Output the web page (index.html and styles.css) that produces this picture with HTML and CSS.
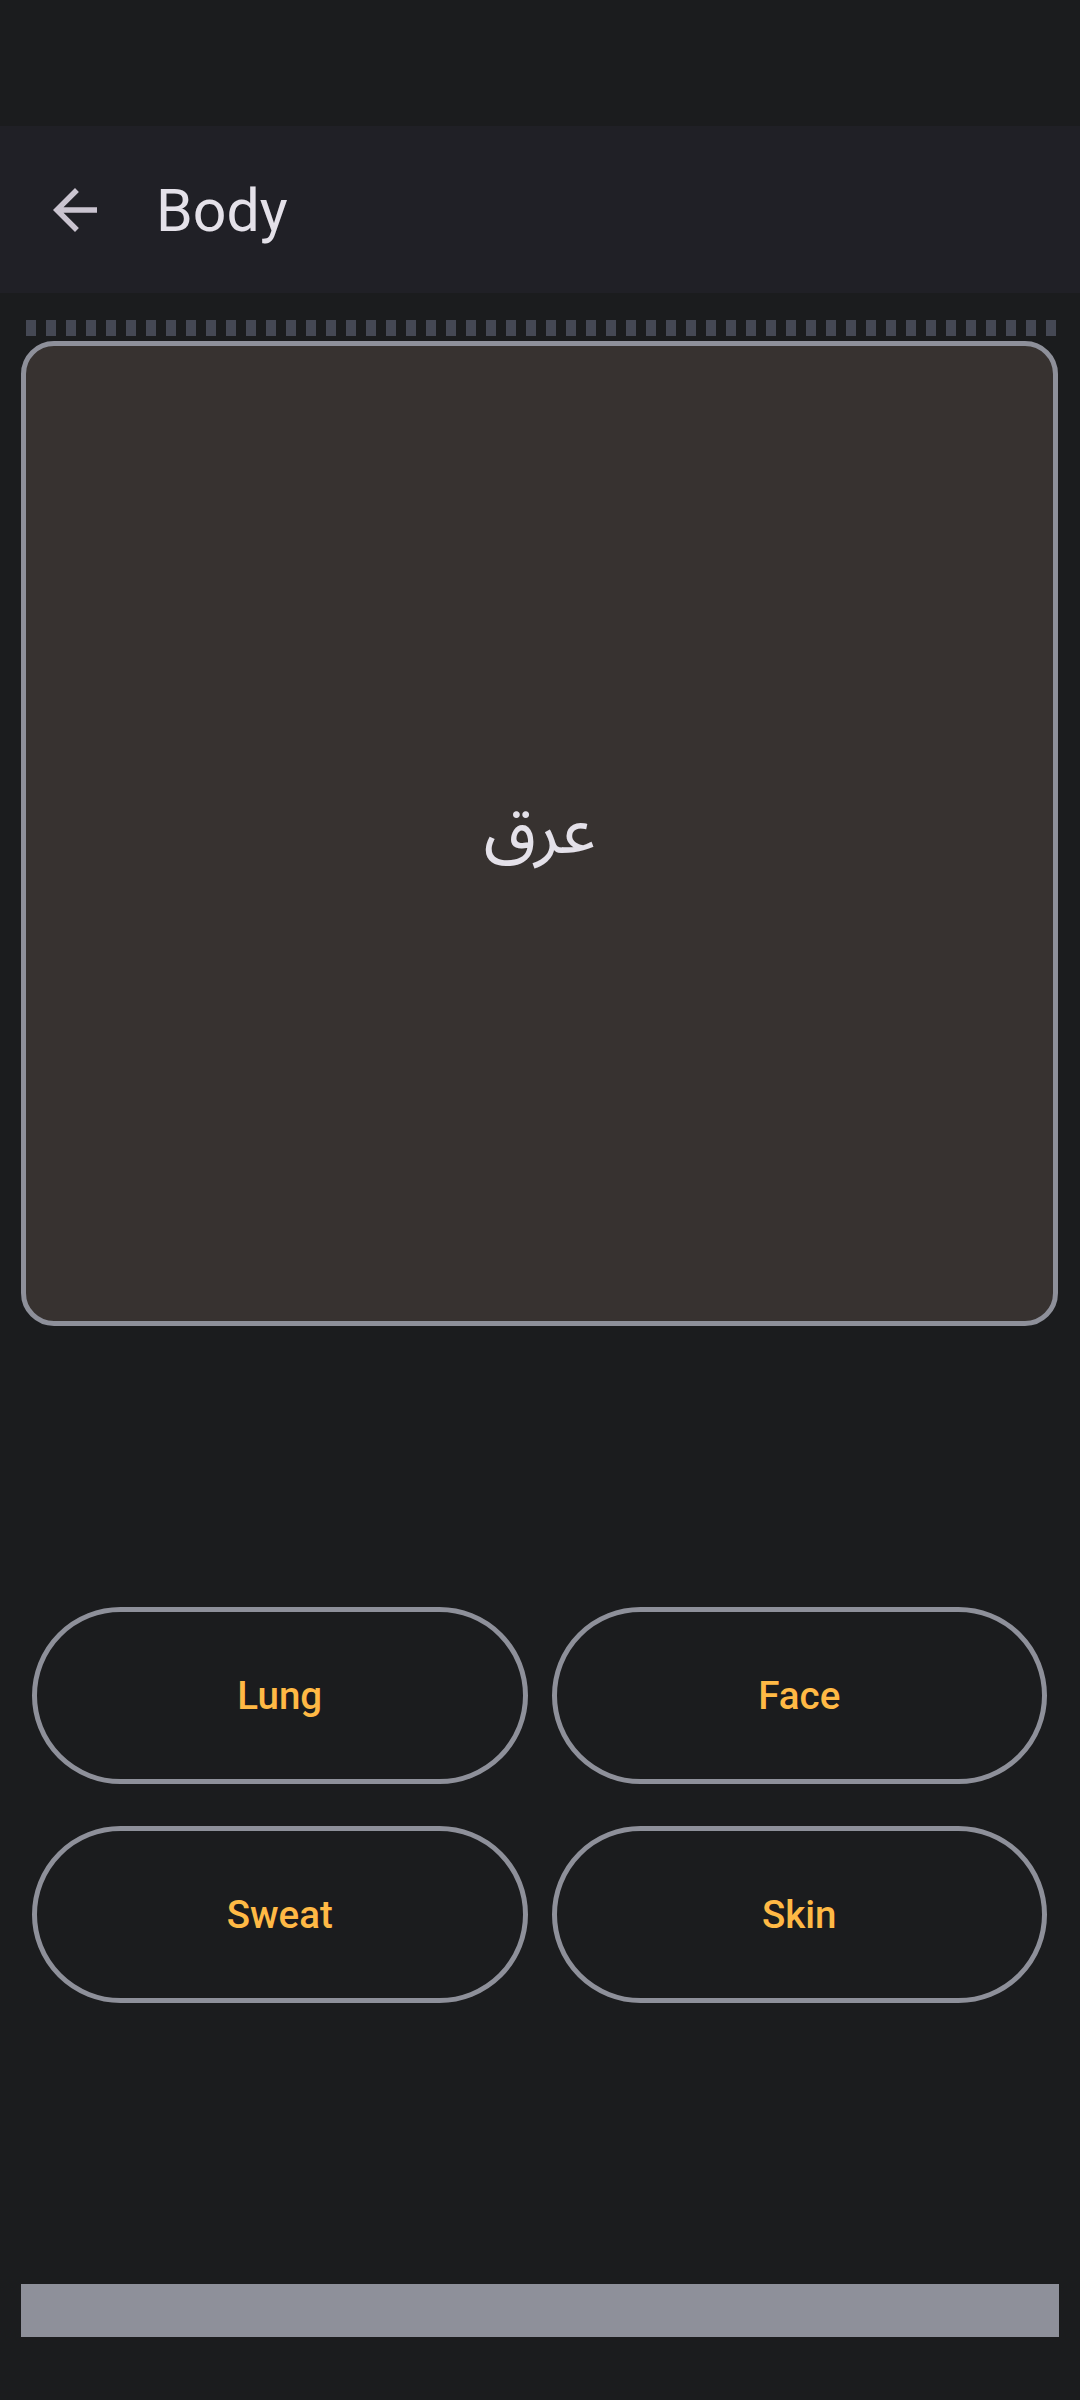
FILE: index.html
```html
<!DOCTYPE html>
<html lang="en">
<head>
<meta charset="utf-8">
<title>Body</title>
<link rel="stylesheet" href="styles.css">
</head>
<body>
<div class="screen">
  <div class="status"></div>
  <header class="appbar">
    <svg class="back" viewBox="0 0 24 24" aria-hidden="true"><path d="M20 11H7.83l5.59-5.59L12 4l-8 8 8 8 1.41-1.41L7.83 13H20v-2z"/></svg>
    <h1 class="title">Body</h1>
  </header>
  <div class="dashes"></div>
  <div class="card"><span class="word" lang="ar" dir="rtl">عرق</span></div>
  <div class="choices">
    <button class="choice">Lung</button>
    <button class="choice">Face</button>
    <button class="choice">Sweat</button>
    <button class="choice">Skin</button>
  </div>
  <div class="bottombar"></div>
</div>
</body>
</html>
```
FILE: styles.css
```css
html, body {
  margin: 0;
  padding: 0;
  background: #1b1c1e;
}
.screen {
  width: 1080px;
  height: 2400px;
  background: #1b1c1e;
  font-family: Roboto, "Noto Sans", sans-serif;
  display: flex;
  flex-direction: column;
}
.status {
  height: 126px;
  flex: none;
}
.appbar {
  height: 167px;
  flex: none;
  background: #202026;
  display: flex;
  align-items: center;
  padding-left: 42px;
}
.back {
  width: 66px;
  height: 66px;
  fill: #cac4d0;
  flex: none;
}
.title {
  margin: 0 0 0 48px;
  font-size: 59px;
  font-weight: 400;
  color: #e4e1e9;
  line-height: 1;
  padding-top: 2px;
}
.dashes {
  flex: none;
  height: 16px;
  margin: 27px 0 0 26px;
  width: 1032px;
  background: repeating-linear-gradient(to right, #454854 0 10px, transparent 10px 20px);
}
.card {
  flex: none;
  box-sizing: border-box;
  margin: 5px 0 0 21px;
  width: 1037px;
  height: 985px;
  border: 5px solid #8e909a;
  border-radius: 33px;
  background: #373230;
  display: flex;
  align-items: center;
  justify-content: center;
}
.word {
  font-family: "Noto Sans Arabic", "DejaVu Sans", sans-serif;
  font-size: 68px;
  color: #e4e1e9;
  line-height: 1;
  margin-top: -4px;
}
.choices {
  flex: none;
  margin: 281px 33px 0 32px;
  display: grid;
  grid-template-columns: 1fr 1fr;
  grid-auto-rows: 177px;
  column-gap: 24px;
  row-gap: 42px;
}
.choice {
  box-sizing: border-box;
  border: 5px solid #8e909a;
  border-radius: 999px;
  background: transparent;
  color: #ffb945;
  font-family: Roboto, "Noto Sans", sans-serif;
  font-weight: 500;
  font-size: 38.5px;
  padding: 0;
  margin: 0;
}
.bottombar {
  flex: none;
  margin: 281px 0 0 21px;
  width: 1038px;
  height: 53px;
  background: #8e909a;
}
```
